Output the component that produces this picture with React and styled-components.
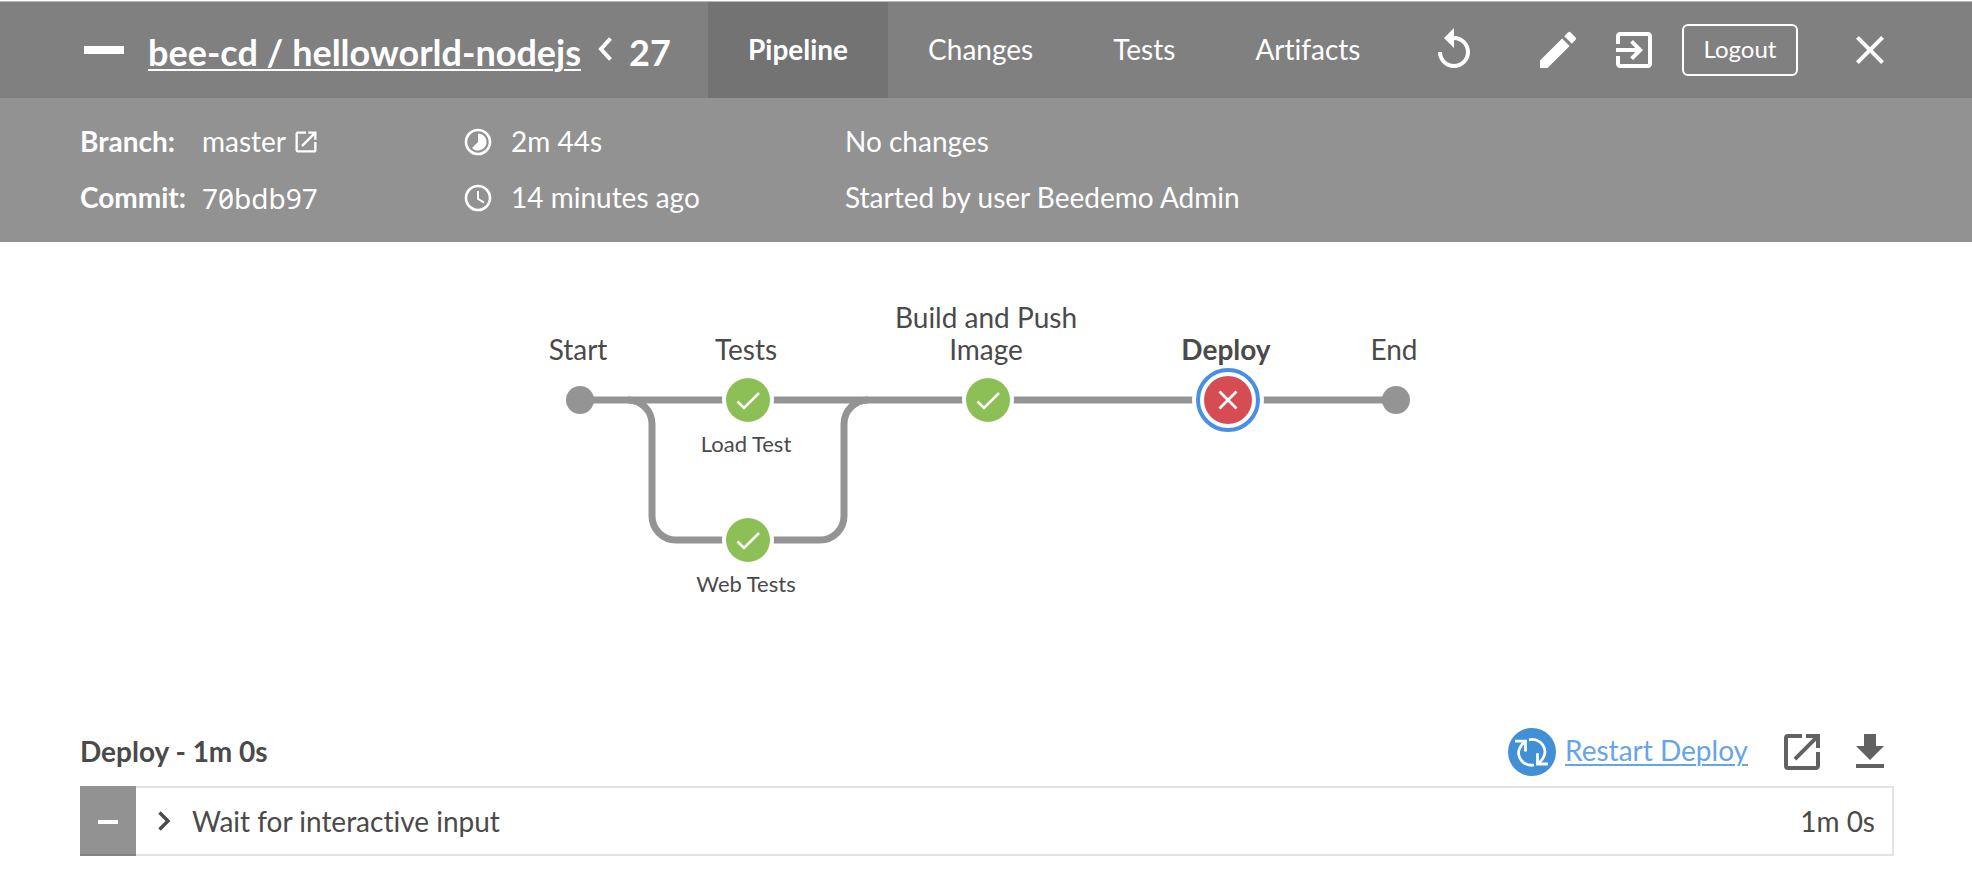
import React from "react";
import styled, { createGlobalStyle, css } from "styled-components";

const GlobalStyle = createGlobalStyle`
  *, *::before, *::after { box-sizing: border-box; }
  body {
    margin: 0;
    background: #fff;
    color: #4a4a4a;
    font-family: Lato, "Liberation Sans", sans-serif;
    font-size: 28px;
    line-height: 32px;
    font-variant-ligatures: none;
  }
  h1, h2 { margin: 0; padding: 0; font-size: inherit; }
  a { color: inherit; text-decoration: none; }
  button { font: inherit; color: inherit; background: none; border: 0; padding: 0; cursor: pointer; }
`;

const Page = styled.div`
  border-top: 1px solid #fff;
`;

const TopBar = styled.header`
  display: flex;
  align-items: center;
  height: 97px;
  padding: 0 78px 0 84px;
  border-top: 1px solid #b4b9b9;
  background: #808080;
  color: #fff;
`;

const StatusBar = styled.span`
  width: 40px;
  height: 8px;
  background: #fff;
`;

const Title = styled.h1`
  display: flex;
  align-items: center;
  width: 584px;
  padding-left: 24px;
  padding-top: 4px;
  font-size: 36px;
  line-height: 44px;
  font-weight: 700;
  white-space: nowrap;

  a {
    text-decoration: underline;
    text-decoration-thickness: 2px;
    text-underline-offset: 3px;
  }
`;

const TitleChevron = styled.svg`
  width: 14px;
  height: 24px;
  margin: 0 17px 6px 17px;
`;

const Tabs = styled.nav`
  display: flex;
  align-self: stretch;
  flex: 1;
`;

const Tab = styled.a`
  display: flex;
  align-items: center;
  padding: 0 40px 2px;
  ${(p) => p.$active && css`
    background: #737373;
    font-weight: 700;
  `}
`;

const Actions = styled.div`
  display: flex;
  align-items: center;
`;

const IconButton = styled.button`
  display: block;
  width: 48px;
  height: 48px;
  margin-left: ${(p) => p.$gap || 0}px;
`;

const IconSvg = styled.svg`
  display: block;
  width: ${(p) => p.$size}px;
  height: ${(p) => p.$size}px;
  fill: currentColor;
`;

const LogoutButton = styled.button`
  width: 116px;
  height: 52px;
  margin-left: 24px;
  padding-bottom: 2px;
  border: 2px solid #fff;
  border-radius: 6px;
  font-size: 24px;
`;

const RunInfo = styled.section`
  display: grid;
  grid-template-columns: 384px 381px 1fr;
  grid-auto-rows: 56px;
  padding: 16px 80px;
  background: #929292;
  color: #fff;
`;

const InfoItem = styled.div`
  display: flex;
  align-items: center;
`;

const InfoLabel = styled.strong`
  width: 122px;
  padding-bottom: 2px;
`;

const InfoText = styled.span`
  padding-bottom: 2px;
`;

const InfoLink = styled.a`
  display: flex;
  align-items: center;
  gap: 6px;
`;

const Hash = styled.span`
  font-family: "Noto Sans", sans-serif;
  font-feature-settings: "zero";
`;

const InfoIcon = styled.svg`
  width: 28px;
  height: 28px;
  margin-right: 19px;
`;

const GraphArea = styled.section`
  padding: 58px 0 104px;
`;

const Canvas = styled.div`
  position: relative;
  width: 840px;
  height: 324px;
  margin: 0 auto;

  svg { display: block; }
`;

const NodeLabel = styled.div`
  position: absolute;
  width: 196px;
  display: flex;
  justify-content: center;
  text-align: center;
  font-weight: ${(p) => (p.$selected ? 700 : 400)};
  ${(p) => p.$small
    ? css`font-size: 22px;`
    : css`height: 65px; align-items: flex-end;`}
`;

const Steps = styled.section`
  padding: 0 78px 32px 80px;
`;

const StepsHeader = styled.div`
  display: flex;
  align-items: center;
  justify-content: space-between;
  height: 48px;
  margin-bottom: 10px;

  h2 { padding-bottom: 2px; }
`;

const StepsTools = styled.div`
  display: flex;
  align-items: center;
  color: #616161;
`;

const RestartLink = styled.a`
  display: flex;
  align-items: center;
  gap: 9px;
  margin-right: 10px;
  color: #67a4e8;

  span {
    text-decoration: underline;
    text-decoration-thickness: 2px;
    text-underline-offset: 3px;
    padding-bottom: 4px;
  }
`;

const StepRow = styled.button`
  display: flex;
  align-items: stretch;
  width: 100%;
  height: 70px;
  text-align: left;
`;

const StepStatus = styled.span`
  display: flex;
  align-items: center;
  justify-content: center;
  width: 56px;
  padding-top: 2px;
  background: #929292;
  box-shadow: inset 0 -2px #838383;

  &::before {
    content: "";
    width: 20px;
    height: 4px;
    background: #fff;
  }
`;

const StepBody = styled.span`
  flex: 1;
  display: flex;
  align-items: center;
  padding: 0 17px 0 22px;
  border: 2px solid #e3e3e3;
  border-left: 0;
`;

const StepChevron = styled.svg`
  width: 14px;
  height: 20px;
  margin-right: 20px;
`;

const StepName = styled.span`
  flex: 1;
`;

const paths = {
  replay: "M12 5V1L7 6l5 5V7c3.31 0 6 2.69 6 6s-2.69 6-6 6-6-2.69-6-6H4c0 4.42 3.58 8 8 8s8-3.58 8-8-3.58-8-8-8z",
  edit: "M3 17.25V21h3.75L17.81 9.94l-3.75-3.75L3 17.25zM20.71 7.04a.996.996 0 0 0 0-1.41l-2.34-2.34a.996.996 0 0 0-1.41 0l-1.83 1.83 3.75 3.75 1.83-1.83z",
  exit: "M10.09 15.59L11.5 17l5-5-5-5-1.41 1.41L12.67 11H3v2h9.67l-2.58 2.59zM19 3H5c-1.11 0-2 .9-2 2v4h2V5h14v14H5v-4H3v4c0 1.1.89 2 2 2h14c1.1 0 2-.9 2-2V5c0-1.1-.9-2-2-2z",
  close: "M19 6.41L17.59 5 12 10.59 6.41 5 5 6.41 10.59 12 5 17.59 6.41 19 12 13.41 17.59 19 19 17.59 13.41 12z",
  open: "M19 19H5V5h7V3H5a2 2 0 0 0-2 2v14a2 2 0 0 0 2 2h14c1.1 0 2-.9 2-2v-7h-2v7zM14 3v2h3.59l-9.83 9.83 1.41 1.41L19 6.41V10h2V3h-7z",
  download: "M19 9h-4V3H9v6H5l7 7 7-7zM5 18v2h14v-2H5z",
};

const Icon = ({ name, size = 48 }) => (
  <IconSvg $size={size} viewBox="0 0 24 24" aria-hidden="true">
    <path d={paths[name]} />
  </IconSvg>
);

const labels = [
  { text: "Start", x: 14, y: 0 },
  { text: "Tests", x: 182, y: 0 },
  { text: "Build and Push Image", x: 422, y: 0 },
  { text: "Deploy", x: 662, y: 0, selected: true },
  { text: "End", x: 830, y: 0 },
  { text: "Load Test", x: 182, y: 128, small: true },
  { text: "Web Tests", x: 182, y: 268, small: true },
];

const SuccessNode = ({ x, y }) => (
  <g transform={`translate(${x} ${y})`}>
    <circle r="26" fill="#fff" />
    <circle r="22" fill="#8cc057" />
    <path d="M-10.5 1.5L-4 8L11 -7" fill="none" stroke="#fff" strokeWidth="2.6" />
  </g>
);

const FailedNode = ({ x, y }) => (
  <g transform={`translate(${x} ${y})`}>
    <circle r="36" fill="#fff" />
    <circle r="30" fill="none" stroke="#4a90e2" strokeWidth="4" />
    <circle r="24" fill="#d54c53" />
    <path d="M-8.5 -8.5L8.5 8.5M8.5 -8.5L-8.5 8.5" stroke="#fff" strokeWidth="2.6" />
  </g>
);

const PipelineGraph = () => (
  <GraphArea>
    <Canvas>
      <svg width="846" height="300" viewBox="0 0 846 300" role="img" aria-label="Pipeline stages">
        <g fill="none" stroke="#949494" strokeWidth="7">
          <path d="M14 100H830" />
          <path d="M62 100A24 24 0 0 1 86 124V216A24 24 0 0 0 110 240H254A24 24 0 0 0 278 216V124A24 24 0 0 1 302 100" />
        </g>
        <circle cx="14" cy="100" r="14" fill="#949494" />
        <circle cx="830" cy="100" r="14" fill="#949494" />
        <SuccessNode x={182} y={100} />
        <SuccessNode x={182} y={240} />
        <SuccessNode x={422} y={100} />
        <FailedNode x={662} y={100} />
      </svg>
      {labels.map((l) => (
        <NodeLabel
          key={l.text}
          $small={l.small}
          $selected={l.selected}
          style={{ left: l.x - 100, top: l.y }}
        >
          {l.text}
        </NodeLabel>
      ))}
    </Canvas>
  </GraphArea>
);

export default function App() {
  return (
    <Page>
      <GlobalStyle />
      <TopBar>
        <StatusBar />
        <Title>
          <a href="#pipeline">bee-cd / helloworld-nodejs</a>
          <TitleChevron viewBox="0 0 14 24" aria-hidden="true">
            <path d="M12.5 1.5L3 12L12.5 22.5" fill="none" stroke="#fff" strokeWidth="4" />
          </TitleChevron>
          27
        </Title>
        <Tabs>
          <Tab href="#pipeline" $active>Pipeline</Tab>
          <Tab href="#changes">Changes</Tab>
          <Tab href="#tests">Tests</Tab>
          <Tab href="#artifacts">Artifacts</Tab>
        </Tabs>
        <Actions>
          <IconButton aria-label="Rerun"><Icon name="replay" /></IconButton>
          <IconButton aria-label="Edit" $gap={56}><Icon name="edit" /></IconButton>
          <IconButton aria-label="Go to classic" $gap={28}><Icon name="exit" /></IconButton>
          <LogoutButton>Logout</LogoutButton>
          <IconButton aria-label="Close" $gap={48}><Icon name="close" /></IconButton>
        </Actions>
      </TopBar>

      <RunInfo>
        <InfoItem>
          <InfoLabel>Branch:</InfoLabel>
          <InfoLink href="#branch"><InfoText>master</InfoText> <Icon name="open" size={28} /></InfoLink>
        </InfoItem>
        <InfoItem>
          <InfoIcon viewBox="0 0 28 28" aria-hidden="true">
            <circle cx="14" cy="14" r="12" fill="none" stroke="#fff" strokeWidth="2.6" />
            <path d="M14 5.5A8.5 8.5 0 1 1 8 20L14 14Z" fill="#fff" />
          </InfoIcon>
          <InfoText>2m 44s</InfoText>
        </InfoItem>
        <InfoItem><InfoText>No changes</InfoText></InfoItem>
        <InfoItem>
          <InfoLabel>Commit:</InfoLabel>
          <Hash>70bdb97</Hash>
        </InfoItem>
        <InfoItem>
          <InfoIcon viewBox="0 0 28 28" aria-hidden="true">
            <circle cx="14" cy="14" r="12" fill="none" stroke="#fff" strokeWidth="2.6" />
            <path d="M14 7V14.8L20 18.6" fill="none" stroke="#fff" strokeWidth="2" />
          </InfoIcon>
          <InfoText>14 minutes ago</InfoText>
        </InfoItem>
        <InfoItem><InfoText>Started by user Beedemo Admin</InfoText></InfoItem>
      </RunInfo>

      <PipelineGraph />

      <Steps>
        <StepsHeader>
          <h2>Deploy - 1m 0s</h2>
          <StepsTools>
            <RestartLink href="#restart">
              <svg width="48" height="48" viewBox="0 0 48 48" aria-hidden="true">
                <circle cx="24" cy="24" r="24" fill="#418fd4" />
                <g fill="none" stroke="#fff" strokeWidth="2.8">
                  <path d="M21 11.8A13 13 0 0 1 37 24.3Q36.500 30 30 36M26 37A13 13 0 0 1 10.500 24.3Q11 18.500 17.500 13" />
                  <path d="M7 13.2H17.500V23.600M40 36H29.500V25.200" />
                </g>
              </svg>
              <span>Restart Deploy</span>
            </RestartLink>
            <IconButton aria-label="Open log" $gap={20}><Icon name="open" /></IconButton>
            <IconButton aria-label="Download log" $gap={20}><Icon name="download" /></IconButton>
          </StepsTools>
        </StepsHeader>
        <StepRow>
          <StepStatus />
          <StepBody>
            <StepChevron viewBox="0 0 14 20" aria-hidden="true">
              <path d="M1.5 1.5L10 10L1.5 18.5" fill="none" stroke="#4a4a4a" strokeWidth="3.4" />
            </StepChevron>
            <StepName>Wait for interactive input</StepName>
            <span>1m 0s</span>
          </StepBody>
        </StepRow>
      </Steps>
    </Page>
  );
}
